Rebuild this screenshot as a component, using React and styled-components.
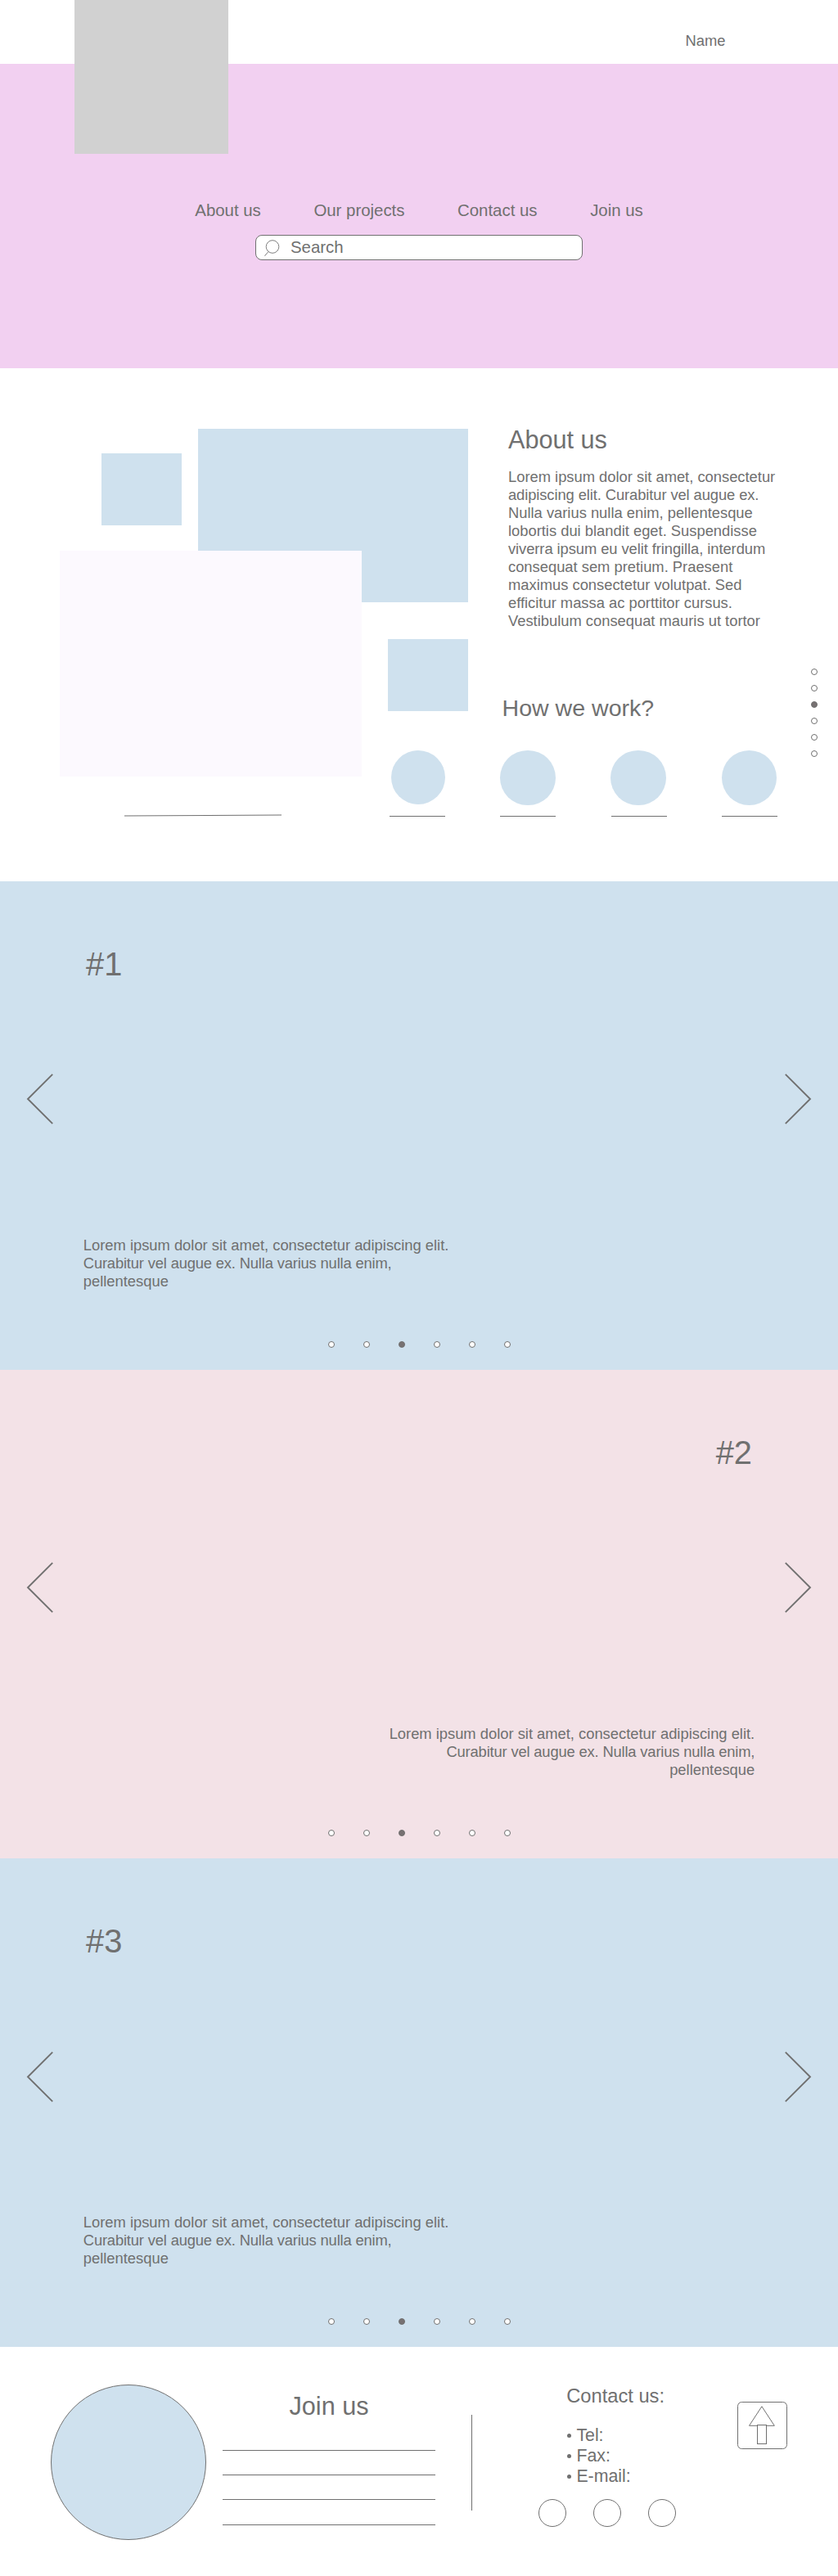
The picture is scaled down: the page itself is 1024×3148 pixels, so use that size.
import React from "react";
import styled, { createGlobalStyle } from "styled-components";

const ink = "#707070";
const blue = "#cfe1ee";
const rose = "#f3e2e7";

const GlobalStyle = createGlobalStyle`
  body {
    margin: 0;
    background: #fff;
    color: ${ink};
    font-family: "Liberation Sans", Arial, Helvetica, sans-serif;
  }
  h1, h2, h3, p, ul { margin: 0; padding: 0; font-weight: 400; }
  button { border: 0; padding: 0; background: none; font: inherit; color: inherit; }
`;

const Page = styled.div`
  width: 1024px;
  height: 3148px;
  overflow: hidden;
`;

/* Header and hero */
const TopBar = styled.header`
  position: relative;
  display: flex;
  justify-content: flex-end;
  height: 78px;
  padding-right: 137.5px;
  box-sizing: border-box;
`;

const Logo = styled.div`
  position: absolute;
  top: 0;
  left: 91px;
  width: 188px;
  height: 188px;
  background: #d1d1d1;
`;

const UserName = styled.span`
  margin-top: 39px;
  font-size: 18.35px;
  line-height: 22px;
`;

const Hero = styled.section`
  height: 372px;
  padding-top: 167px;
  box-sizing: border-box;
  background: #f2d0f1;
`;

const Nav = styled.nav`
  display: flex;
  gap: 64.6px;
  padding-left: 238.3px;
  font-size: 20.4px;
  line-height: 24px;
  white-space: nowrap;
`;

const NavLink = styled.a`
  color: inherit;
`;

const SearchBox = styled.div`
  display: flex;
  align-items: center;
  width: 400px;
  height: 31px;
  margin: 18px 0 0 312px;
  padding-left: 10px;
  box-sizing: border-box;
  border: 1px solid ${ink};
  border-radius: 8px;
  background: #fff;
  font-size: 20.4px;
  line-height: 24px;
`;

const SearchLabel = styled.span`
  margin: 0 0 2px 10px;
`;

/* About */
const About = styled.section`
  display: grid;
  height: 627px;
  grid-template-columns: 73px 51px 98px 20px 199.6px 32.4px 98px 415px 37px;
  grid-template-rows: 74px 30.4px 87.4px 31.7px 62.1px 45.6px 88px 47.8px 32px 128px;
`;

const Tile = styled.div`
  grid-column: ${(p) => p.$col};
  grid-row: ${(p) => p.$row};
  background: ${(p) => p.$fill || blue};
`;

const CaptionRule = styled.div`
  grid-column: 3 / 6;
  grid-row: 10;
  width: 192px;
  height: 1px;
  margin: 47.5px 0 0 28px;
  background: ${ink};
  transform: rotate(-0.3deg);
`;

const AboutCopy = styled.div`
  grid-column: 8;
  grid-row: 2 / 7;
  width: 345px;
  margin: 1px 0 0 49px;
`;

const Heading = styled.h2`
  font-size: 30.6px;
  line-height: 24px;
`;

const Copy = styled.p`
  margin-top: 23.4px;
  font-size: 18.35px;
  line-height: 22px;
`;

const Line = styled.span`
  display: block;
  white-space: nowrap;
  letter-spacing: ${(p) => p.$tracking || 0}px;
`;

const WorkHeading = styled.h2`
  grid-column: 8;
  grid-row: 7 / 9;
  margin: 70px 0 0 41.6px;
  font-size: 28.56px;
  line-height: 28px;
`;

const Steps = styled.div`
  grid-column: 7 / 9;
  grid-row: 9 / 11;
  display: flex;
  gap: 67.5px;
  padding-left: 2px;
`;

const Step = styled.div`
  flex: none;
  width: 68px;
  height: 81px;
  border-bottom: 1px solid ${ink};
  box-sizing: border-box;
`;

const StepCircle = styled.div`
  width: ${(p) => p.$size}px;
  height: ${(p) => p.$size}px;
  margin-left: ${(p) => p.$shift}px;
  border-radius: 50%;
  background: ${blue};
`;

const Dots = styled.div`
  display: flex;
  gap: 35.1px;
  padding-left: 400.5px;
`;

const SideDots = styled.div`
  grid-column: 9;
  grid-row: 7 / 11;
  display: flex;
  flex-direction: column;
  gap: 12px;
  padding: 36px 0 0 4px;
`;

const Dot = styled.span`
  width: 8px;
  height: 8px;
  box-sizing: border-box;
  border: 1px solid ${ink};
  border-radius: 50%;
  background: ${(p) => (p.$active ? "#777172" : "#fff")};
`;

/* Project slides */
const Slide = styled.section`
  height: 597.1px;
  padding-top: 81px;
  box-sizing: border-box;
  background: ${(p) => p.$fill};
`;

const SlideTitle = styled.h2`
  padding: 0 105px;
  font-size: 39.8px;
  line-height: 40px;
  text-align: ${(p) => p.$align};
`;

const Arrows = styled.div`
  display: flex;
  justify-content: space-between;
  height: 62px;
  margin-top: 114.4px;
  padding: 0 31px;
`;

const ArrowButton = styled.button`
  width: 34px;
  height: 62px;
  svg { display: block; }
`;

const SlideCopy = styled.p`
  height: 66px;
  margin: 136.8px 101.8px 62px;
  font-size: 18.35px;
  line-height: 21.9px;
  text-align: ${(p) => p.$align};
`;

/* Footer */
const Footer = styled.footer`
  display: flex;
  align-items: flex-start;
  height: 279.7px;
  padding-left: 62px;
`;

const Portrait = styled.div`
  width: 190px;
  height: 190px;
  margin-top: 45.7px;
  box-sizing: border-box;
  border: 1px solid ${ink};
  border-radius: 50%;
  background: ${blue};
`;

const JoinForm = styled.div`
  width: 260px;
  margin: 59.7px 0 0 20px;
  text-align: center;
`;

const Fields = styled.div`
  display: flex;
  flex-direction: column;
  gap: 29.2px;
  margin-top: 42px;
`;

const Field = styled.div`
  height: 1px;
  background: ${ink};
`;

const Divider = styled.div`
  width: 1px;
  height: 117px;
  margin: 82.6px 0 0 44px;
  background: ${ink};
`;

const Contact = styled.div`
  width: 168px;
  margin: 45.4px 0 0 81px;
`;

const ContactTitle = styled.h3`
  padding-left: 34.2px;
  font-size: 23.7px;
  line-height: 28px;
`;

const ContactList = styled.ul`
  margin-top: 22.7px;
  padding-left: 35.4px;
  list-style: none;
  font-size: 21.3px;
  line-height: 24.9px;
`;

const ContactItem = styled.li`
  display: flex;
  align-items: center;
  gap: 6px;
  &::before {
    content: "";
    width: 5px;
    height: 5px;
    border-radius: 50%;
    background: ${ink};
  }
`;

const Socials = styled.div`
  display: flex;
  gap: 33px;
  margin-top: 14.8px;
`;

const Social = styled.span`
  width: 34px;
  height: 34px;
  box-sizing: border-box;
  border: 1px solid ${ink};
  border-radius: 50%;
`;

const TopButton = styled.button`
  width: 61px;
  height: 58px;
  margin: 66.6px 0 0 75.4px;
  svg { display: block; }
`;

const DOT_COUNT = 6;
const renderDots = () =>
  Array.from({ length: DOT_COUNT }, (_, i) => <Dot key={i} $active={i === 2} />);

const SearchIcon = () => (
  <svg width="22" height="26" viewBox="0 0 22 26" fill="none" stroke={ink} strokeWidth="0.9">
    <circle cx="10" cy="11.5" r="7.8" />
    <path d="M5 17.5 L0.4 22.8" />
  </svg>
);

const Chevron = ({ right }) => (
  <svg width="34" height="62" viewBox="0 0 34 62" fill="none" stroke={ink} strokeWidth="1.9">
    <path d={right ? "M0.8 0.8 L31 31 L0.8 61.2" : "M33.2 0.8 L3 31 L33.2 61.2"} />
  </svg>
);

const slides = [
  { title: "#1", fill: blue, align: "left" },
  { title: "#2", fill: rose, align: "right" },
  { title: "#3", fill: blue, align: "left" },
];

const steps = [
  { size: 66, shift: 2 },
  { size: 67.4, shift: 0 },
  { size: 67.4, shift: -0.8 },
  { size: 67.4, shift: -0.8 },
];

const aboutLines = [
  ["Lorem ipsum dolor sit amet, consectetur"],
  ["adipiscing elit. Curabitur vel augue ex.", -0.09],
  ["Nulla varius nulla enim, pellentesque"],
  ["lobortis dui blandit eget. Suspendisse"],
  ["viverra ipsum eu velit fringilla, interdum", -0.07],
  ["consequat sem pretium. Praesent"],
  ["maximus consectetur volutpat. Sed"],
  ["efficitur massa ac porttitor cursus."],
  ["Vestibulum consequat mauris ut tortor"],
];

const slideLines = [
  ["Lorem ipsum dolor sit amet, consectetur adipiscing elit."],
  ["Curabitur vel augue ex. Nulla varius nulla enim,", -0.16],
  ["pellentesque"],
];

const renderLines = (lines) =>
  lines.map(([text, tracking]) => (
    <Line key={text} $tracking={tracking}>
      {text}
    </Line>
  ));

export default function App() {
  return (
    <Page>
      <GlobalStyle />
      <TopBar>
        <Logo />
        <UserName>Name</UserName>
      </TopBar>
      <Hero>
        <Nav>
          <NavLink>About us</NavLink>
          <NavLink>Our projects</NavLink>
          <NavLink>Contact us</NavLink>
          <NavLink>Join us</NavLink>
        </Nav>
        <SearchBox>
          <SearchIcon />
          <SearchLabel>Search</SearchLabel>
        </SearchBox>
      </Hero>

      <About>
        <Tile $col="3" $row="3" />
        <Tile $col="5 / 8" $row="2 / 6" />
        <Tile $col="2 / 6" $row="5 / 10" $fill="#fcf9fe" />
        <Tile $col="7" $row="7" />
        <CaptionRule />
        <AboutCopy>
          <Heading>About us</Heading>
          <Copy>{renderLines(aboutLines)}</Copy>
        </AboutCopy>
        <WorkHeading>How we work?</WorkHeading>
        <Steps>
          {steps.map((s, i) => (
            <Step key={i}>
              <StepCircle $size={s.size} $shift={s.shift} />
            </Step>
          ))}
        </Steps>
        <SideDots>{renderDots()}</SideDots>
      </About>

      {slides.map((s) => (
        <Slide key={s.title} $fill={s.fill}>
          <SlideTitle $align={s.align}>{s.title}</SlideTitle>
          <Arrows>
            <ArrowButton aria-label="Previous">
              <Chevron />
            </ArrowButton>
            <ArrowButton aria-label="Next">
              <Chevron right />
            </ArrowButton>
          </Arrows>
          <SlideCopy $align={s.align}>{renderLines(slideLines)}</SlideCopy>
          <Dots>{renderDots()}</Dots>
        </Slide>
      ))}

      <Footer>
        <Portrait />
        <JoinForm>
          <Heading>Join us</Heading>
          <Fields>
            <Field />
            <Field />
            <Field />
            <Field />
          </Fields>
        </JoinForm>
        <Divider />
        <Contact>
          <ContactTitle>Contact us:</ContactTitle>
          <ContactList>
            <ContactItem>Tel:</ContactItem>
            <ContactItem>Fax:</ContactItem>
            <ContactItem>E-mail:</ContactItem>
          </ContactList>
          <Socials>
            <Social />
            <Social />
            <Social />
          </Socials>
        </Contact>
        <TopButton aria-label="Back to top">
          <svg width="61" height="58" viewBox="0 0 61 58" fill="#fff" stroke={ink}>
            <rect x="0.5" y="0.5" width="60" height="57" rx="5" />
            <path d="M29.9 5.8 L45.3 29.3 H14.5 Z" />
            <rect x="24.5" y="28.5" width="11" height="23" />
          </svg>
        </TopButton>
      </Footer>
    </Page>
  );
}
